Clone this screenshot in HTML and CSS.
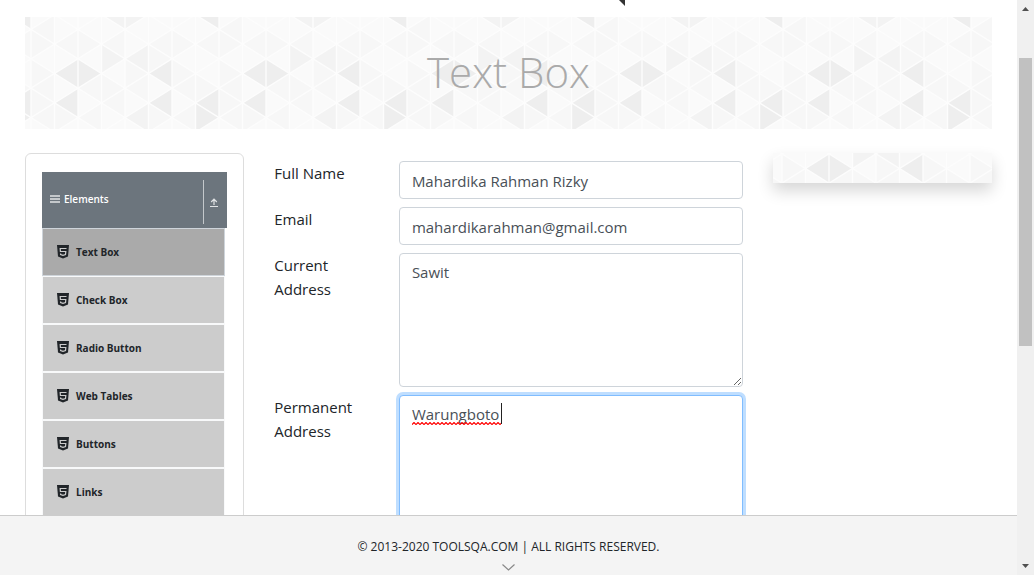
FILE: index.html
```html
<!DOCTYPE html>
<html lang="en">
<head>
<meta charset="utf-8">
<title>Text Box</title>
<link rel="stylesheet" href="styles.css">
</head>
<body>
<svg class="defs" aria-hidden="true">
  <defs>
    <pattern id="triangles" x="6" y="0" width="188" height="118" patternUnits="userSpaceOnUse">
      <rect width="188" height="118" fill="#fafafa"/>
      <g transform="translate(0 -2.3) scale(23.5 14.7)">
        <path fill="#f7f7f7" d="M0 1L1 0V2zM0 1L1 2L0 3zM0 3L1 4L0 5zM1 2L2 1V3zM2 1L3 2L2 3zM3 2L4 1V3zM0 5L1 6L0 7zM0 5L1 4V6zM2 5L3 4V6zM3 4L4 5L3 6zM3 6L4 5V7zM4 3L5 4L4 5zM4 5L5 4V6zM5 2L6 3L5 4zM5 2L6 1V3zM6 1L7 2L6 3zM6 5L7 4V6zM6 3L7 4L6 5zM7 2L8 1V3zM7 4L8 5L7 6zM2 7L3 6V8zM6 7L7 6V8zM0 7L1 6V8zM1 6L2 7L1 8zM5 6L6 7L5 8z"/>
        <path fill="#f3f3f3" d="M3 2L4 3L3 4zM4 3L5 2V4zM4 7L5 6V8zM3 0L4 -1L5 0L4 1z"/>
        <path fill="#eee" d="M1 4L2 3L3 4L2 5zM5 4L6 3V5zM1 6L2 5V7zM5 6L6 5V7zM7 6L8 5V7zM7 6L8 7L7 8zM7 0L8 -1V1z"/>
      </g>
      <path stroke="#fdfdfd" stroke-width="1.4" fill="none" d="M0 0V118M23.5 0V118M47 0V118M70.5 0V118M94 0V118M117.5 0V118M141 0V118M164.5 0V118M188 0V118"/>
      <path stroke="#fdfdfd" stroke-width="1.4" fill="none" d="M0 -105.2l188 117.6M0 -75.8l188 117.6M0 -46.4l188 117.6M0 -17l188 117.6M0 12.4l188 117.6M0 41.8l188 117.6M0 71.2l188 117.6M0 100.6l188 117.6M0 12.4l188 -117.6M0 41.8l188 -117.6M0 71.2l188 -117.6M0 100.6l188 -117.6M0 130l188 -117.6M0 159.4l188 -117.6M0 188.8l188 -117.6M0 218.2l188 -117.6"/>
    </pattern>
    <symbol id="html5" viewBox="0 0 12 14">
      <path fill="#212529" d="M0 0h12l-1 11.500-5 2-5-2z"/>
      <path stroke="#ccc" stroke-width="1.200" fill="none" d="M9.500 3.500H3.200l.2 3h5.400l-.3 3-2.500.9-2.400-.9v-1"/>
    </symbol>
  </defs>
</svg>

<div class="page">
  <main class="content">
    <div class="top"><svg class="fragment" viewBox="0 0 6 6" aria-hidden="true"><path fill="#333" d="M0 0h6v6z"/></svg></div>
    <header class="banner">
      <svg class="texture" aria-hidden="true"><rect width="100%" height="100%" fill="url(#triangles)"/></svg>
      <h1 class="title">Text Box</h1>
    </header>

    <div class="columns">
      <nav class="sidebar" aria-label="Elements">
        <button class="group" type="button">
          <svg class="burger" viewBox="0 0 10 8" aria-hidden="true"><path stroke="#e1e3e5" stroke-width="1.500" d="M0 1h10M0 4h10M0 7h10"/></svg>
          <span class="group-name">Elements</span>
          <span class="group-toggle"><svg class="up" viewBox="0 0 8 9" aria-hidden="true"><path stroke="#e1e3e5" stroke-width="1.200" fill="none" d="M4 7V1.500M1.200 4L4 1.200 6.800 4M0 8.500h8"/></svg></span>
        </button>
        <ul class="menu">
          <li><a class="item active" href="#text-box"><svg class="icon" aria-hidden="true"><use href="#html5"/></svg>Text Box</a></li>
          <li><a class="item" href="#checkbox"><svg class="icon" aria-hidden="true"><use href="#html5"/></svg>Check Box</a></li>
          <li><a class="item" href="#radio"><svg class="icon" aria-hidden="true"><use href="#html5"/></svg>Radio Button</a></li>
          <li><a class="item" href="#tables"><svg class="icon" aria-hidden="true"><use href="#html5"/></svg>Web Tables</a></li>
          <li><a class="item" href="#buttons"><svg class="icon" aria-hidden="true"><use href="#html5"/></svg>Buttons</a></li>
          <li><a class="item" href="#links"><svg class="icon" aria-hidden="true"><use href="#html5"/></svg>Links</a></li>
        </ul>
      </nav>

      <form class="form">
        <label class="label" for="name">Full Name</label>
        <input class="control" id="name" type="text" value="Mahardika Rahman Rizky">
        <label class="label" for="email">Email</label>
        <input class="control" id="email" type="email" value="mahardikarahman@gmail.com">
        <label class="label" for="current">Current Address</label>
        <textarea class="control" id="current" rows="5">Sawit</textarea>
        <label class="label" for="permanent">Permanent Address</label>
        <div class="field">
          <textarea class="control focused" id="permanent" rows="5" spellcheck="false">Warungboto</textarea>
          <svg class="spelling" viewBox="0 0 91 22" aria-hidden="true">
            <defs><pattern id="wave" width="4" height="3" y="19" patternUnits="userSpaceOnUse"><path stroke="red" stroke-width="1.200" fill="none" d="M-1 1.500L0 2.500 2 .5 4 2.500 5 1.500"/></pattern></defs>
            <rect y="19" width="89" height="3" fill="url(#wave)"/>
            <path stroke="#222" d="M89.500 0v21"/>
          </svg>
        </div>
      </form>

      <aside class="promo" aria-label="Promotion">
        <svg class="texture" aria-hidden="true"><g transform="translate(3 -41)"><rect x="-3" y="41" width="100%" height="100%" fill="url(#triangles)"/></g></svg>
      </aside>
    </div>
  </main>

  <footer class="footer">
    <span>© 2013-2020 TOOLSQA.COM | ALL RIGHTS RESERVED.</span>
    <button class="collapse" type="button" aria-label="Hide"><svg class="chevron" viewBox="0 0 13 7" aria-hidden="true"><path stroke="#888" stroke-width="1.200" fill="none" d="M.5 .5l6 5.500 6-5.500"/></svg></button>
  </footer>
</div>

<div class="scrollbar" aria-hidden="true">
  <svg class="arrow" viewBox="0 0 7 4"><path fill="#505050" d="M0 4L3.500 0 7 4z"/></svg>
  <div class="track"><div class="thumb"></div></div>
  <svg class="arrow" viewBox="0 0 7 4"><path fill="#505050" d="M0 0h7L3.500 4z"/></svg>
</div>
</body>
</html>
```
FILE: styles.css
```css
* { box-sizing: border-box; }

body {
  margin: 0;
  height: 100vh;
  display: flex;
  overflow: hidden;
  background: #fff;
  color: #212529;
  font: 15px/24px "Segoe UI", "Open Sans", "Noto Sans", sans-serif;
}

.defs { position: absolute; width: 0; height: 0; }

.page {
  flex: 1;
  min-width: 0;
  display: flex;
  flex-direction: column;
}

.content {
  flex: 1;
  min-height: 0;
  overflow: hidden;
  padding: 0 25px;
}

.top { height: 17px; display: flex; justify-content: center; padding-left: 226px; }
.fragment { width: 6px; height: 6px; }

.banner {
  position: relative;
  padding: 19px 0 21px;
  text-align: center;
}

.texture {
  position: absolute;
  inset: 0;
  width: 100%;
  height: 100%;
}

.title {
  position: relative;
  margin: 0;
  color: #aaa;
  font-size: 42px;
  font-weight: 300;
  line-height: 72px;
}

.columns {
  display: grid;
  grid-template-columns: repeat(4, 1fr);
  gap: 30px;
  margin-top: 24px;
  align-items: start;
}

.sidebar {
  border: 1px solid #ddd;
  border-radius: 6px;
  padding: 18px 16px;
}

.group {
  width: 100%;
  height: 56px;
  display: flex;
  align-items: center;
  gap: 4px;
  border: 0;
  padding: 0 9px 2px 8px;
  background: #6c757d;
  color: #fff;
  font: inherit;
  font-size: 10px;
  font-weight: 600;
}

.group-name { flex: 1; text-align: left; line-height: 20px; }

.group-toggle {
  height: 44px;
  display: flex;
  align-items: center;
  border-left: 1px solid #c4c8cb;
  padding: 0 0 0 6px;
  margin-top: 6px;
}

.burger { width: 10px; height: 8px; }
.up { width: 8px; height: 9px; }

.menu { list-style: none; margin: 0; padding: 0 2px 0 0; }

.item {
  height: 48px;
  display: flex;
  align-items: center;
  gap: 7px;
  border: 1px solid #f8f9fa;
  padding: 0 14px;
  background: #ccc;
  color: #212529;
  font-size: 10px;
  font-weight: 700;
  text-decoration: none;
}

.item.active { background: #aaa; border-color: #ced4da; }
.icon { width: 12px; height: 14px; }

.form {
  grid-column: span 2;
  display: grid;
  grid-template-columns: repeat(4, 1fr);
  gap: 8px 30px;
  margin-top: 8px;
}

.control {
  grid-column: span 3;
  display: block;
  width: 100%;
  margin: 0;
  border: 1px solid #ced4da;
  border-radius: 4px;
  padding: 6px 12px;
  background: #fff;
  color: #495057;
  font: inherit;
}

input.control { height: 38px; padding: 7px 12px 5px; }
textarea.control { min-height: 134px; }

.field { position: relative; grid-column: span 3; }

.focused {
  border-color: #80bdff;
  box-shadow: 0 0 0 3px #bfdeff;
}

.spelling {
  position: absolute;
  left: 13px;
  top: 8px;
  width: 91px;
  height: 22px;
  pointer-events: none;
}

.promo {
  position: relative;
  height: 30px;
  box-shadow: 0 8px 16px rgba(0, 0, 0, .16);
}

.footer {
  position: relative;
  height: 60px;
  border-top: 1px solid #ccc;
  padding-top: 19px;
  background: #f4f4f4;
  font-size: 12px;
  text-align: center;
}

.collapse {
  position: absolute;
  left: 0;
  right: 0;
  bottom: 3px;
  margin: 0 auto;
  width: 16px;
  height: 8px;
  display: flex;
  justify-content: center;
  border: 0;
  padding: 0;
  background: none;
}

.chevron { width: 13px; height: 7px; flex: none; }

.scrollbar {
  width: 17px;
  display: flex;
  flex-direction: column;
  align-items: center;
  padding: 7px 0;
  background: #f0f0f0;
}

.arrow { width: 7px; height: 4px; }
.track { flex: 1; padding-top: 47px; }
.thumb { width: 13px; height: 57%; min-height: 20px; background: #c1c1c1; }
```
